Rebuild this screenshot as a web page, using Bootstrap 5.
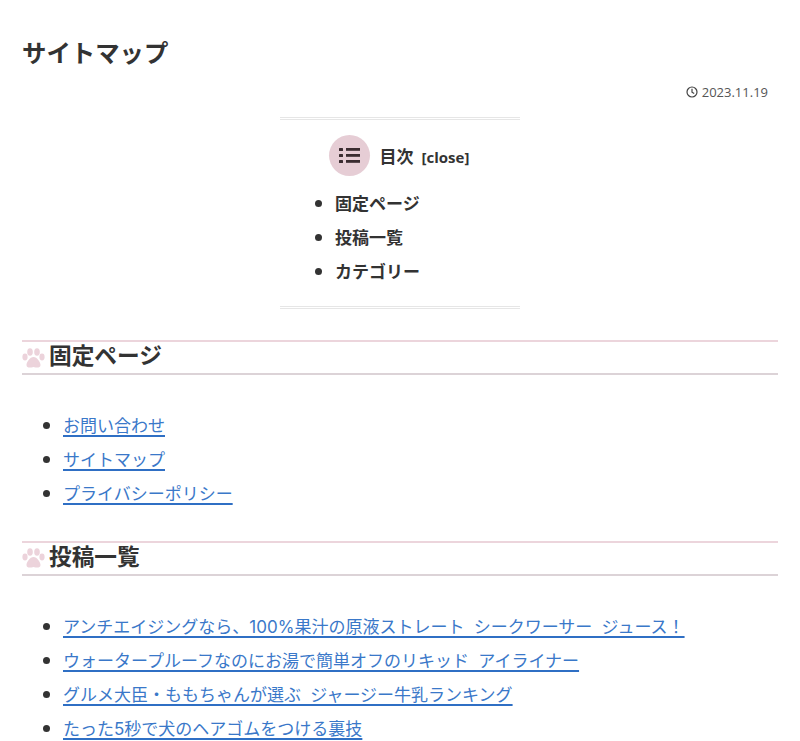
<!DOCTYPE html>
<html lang="ja">
<head>
  <meta charset="UTF-8" />
  <meta name="viewport" content="width=device-width, initial-scale=1.0" />
  <title>サイトマップ</title>
  <link href="https://cdn.jsdelivr.net/npm/bootstrap@5.3.3/dist/css/bootstrap.min.css" rel="stylesheet">
  <style>
    html, body { height: 741px; overflow: hidden; }
    body { font-family: "Noto Sans CJK JP", "Noto Sans", sans-serif; color: #333; background: #fff; font-size: 17px; }
    .page-wrap { padding: 0 22px; height: 741px; overflow: hidden; }
    .page-title { font-size: 24.4px; font-weight: 700; line-height: 36px; margin: 0; padding-top: 34px; }
    .post-date { font-family: "Open Sans", sans-serif; font-size: 13px; line-height: 16px; color: #555; margin-top: 14px; padding-right: 10px; gap: 4px; }
    .toc-box { width: 240px; height: 192px; margin: 17px auto 0; border-top: 3px double #e6e6e6; border-bottom: 3px double #e6e6e6; }
    .toc-head { height: 41px; margin-top: 15px; padding-right: 2px; gap: 10px; font-weight: 700; line-height: 41px; }
    .toc-circle { width: 41px; height: 41px; background: #e6cdd5; }
    .toc-toggle { font-family: "Open Sans", sans-serif; font-size: 15px; font-weight: 700; margin-left: 8px; }
    .toc-list { margin: 10px 0 0; padding-left: 55px; font-weight: 700; font-size: 17px; line-height: 34px; color: #333; }
    .sec-head { font-size: 22.7px; font-weight: 700; line-height: 32px; height: 35px; margin: 0; border-top: 2px solid #ecd5dc; border-bottom: 2px solid #dcd3d7; gap: 4px; color: #333; }
    .sec-label { margin-bottom: 5px; }
    .sec-one { margin-top: 31px; }
    .sec-two { margin-top: 30px; }
    .link-list { margin: 33px 0 0; padding-left: 41px; font-size: 17px; line-height: 34.2px; }
    .link-list a { font-family: "Inter", "Noto Sans CJK JP", sans-serif; line-height: 1; word-spacing: 4.5px; color: #3a78c9; text-decoration-thickness: 2px; text-underline-offset: 3px; text-decoration-color: #2f6fc4; }
  </style>
</head>
<body>
  <div class="page-wrap">
    <h1 class="page-title">サイトマップ</h1>
    <div class="post-date d-flex justify-content-end align-items-center">
      <svg width="12" height="12" viewBox="0 0 12 12" fill="none" stroke="#444" stroke-width="1.2"><circle cx="6" cy="6" r="5"/><path d="M6 2.800V6.200L8.200 7.600"/></svg>
      <span>2023.11.19</span>
    </div>

    <div class="toc-box">
      <div class="toc-head d-flex justify-content-center">
        <span class="toc-circle rounded-circle d-flex align-items-center justify-content-center">
          <svg width="21" height="15" viewBox="0 0 21 15" fill="#3a2c30"><rect x="0" y="0" width="4" height="3" rx=".5"/><rect x="0" y="6" width="4" height="3" rx=".5"/><rect x="0" y="12" width="4" height="3" rx=".5"/><rect x="7" y="0" width="14" height="2.800"/><rect x="7" y="6" width="14" height="2.800"/><rect x="7" y="12" width="14" height="2.800"/></svg>
        </span>
        <span>目次<span class="toc-toggle">[close]</span></span>
      </div>
      <ul class="toc-list">
        <li>固定ページ</li>
        <li>投稿一覧</li>
        <li>カテゴリー</li>
      </ul>
    </div>

    <h2 class="sec-head sec-one d-flex align-items-center">
      <svg width="23" height="22" viewBox="0 0 23 22" fill="#ecd3db"><ellipse cx="3" cy="10" rx="2.600" ry="3.400"/><ellipse cx="8" cy="5" rx="2.800" ry="3.800"/><ellipse cx="15" cy="5" rx="2.800" ry="3.800"/><ellipse cx="20" cy="10" rx="2.600" ry="3.400"/><path d="M11.500 10c3.500 0 7 5 7 8 0 3-3.500 3-7 2-3.500 1-7 1-7-2 0-3 3.500-8 7-8z"/></svg>
      <span class="sec-label">固定ページ</span>
    </h2>
    <ul class="link-list">
      <li><a href="#">お問い合わせ</a></li>
      <li><a href="#">サイトマップ</a></li>
      <li><a href="#">プライバシーポリシー</a></li>
    </ul>

    <h2 class="sec-head sec-two d-flex align-items-center">
      <svg width="23" height="22" viewBox="0 0 23 22" fill="#ecd3db"><ellipse cx="3" cy="10" rx="2.600" ry="3.400"/><ellipse cx="8" cy="5" rx="2.800" ry="3.800"/><ellipse cx="15" cy="5" rx="2.800" ry="3.800"/><ellipse cx="20" cy="10" rx="2.600" ry="3.400"/><path d="M11.500 10c3.500 0 7 5 7 8 0 3-3.500 3-7 2-3.500 1-7 1-7-2 0-3 3.500-8 7-8z"/></svg>
      <span class="sec-label">投稿一覧</span>
    </h2>
    <ul class="link-list">
      <li><a href="#">アンチエイジングなら、100%果汁の原液ストレート シークワーサー ジュース！</a></li>
      <li><a href="#">ウォータープルーフなのにお湯で簡単オフのリキッド アイライナー</a></li>
      <li><a href="#">グルメ大臣・ももちゃんが選ぶ ジャージー牛乳ランキング</a></li>
      <li><a href="#">たった5秒で犬のヘアゴムをつける裏技</a></li>
    </ul>
  </div>
  <script src="https://cdn.jsdelivr.net/npm/bootstrap@5.3.3/dist/js/bootstrap.bundle.min.js"></script>
</body>
</html>
